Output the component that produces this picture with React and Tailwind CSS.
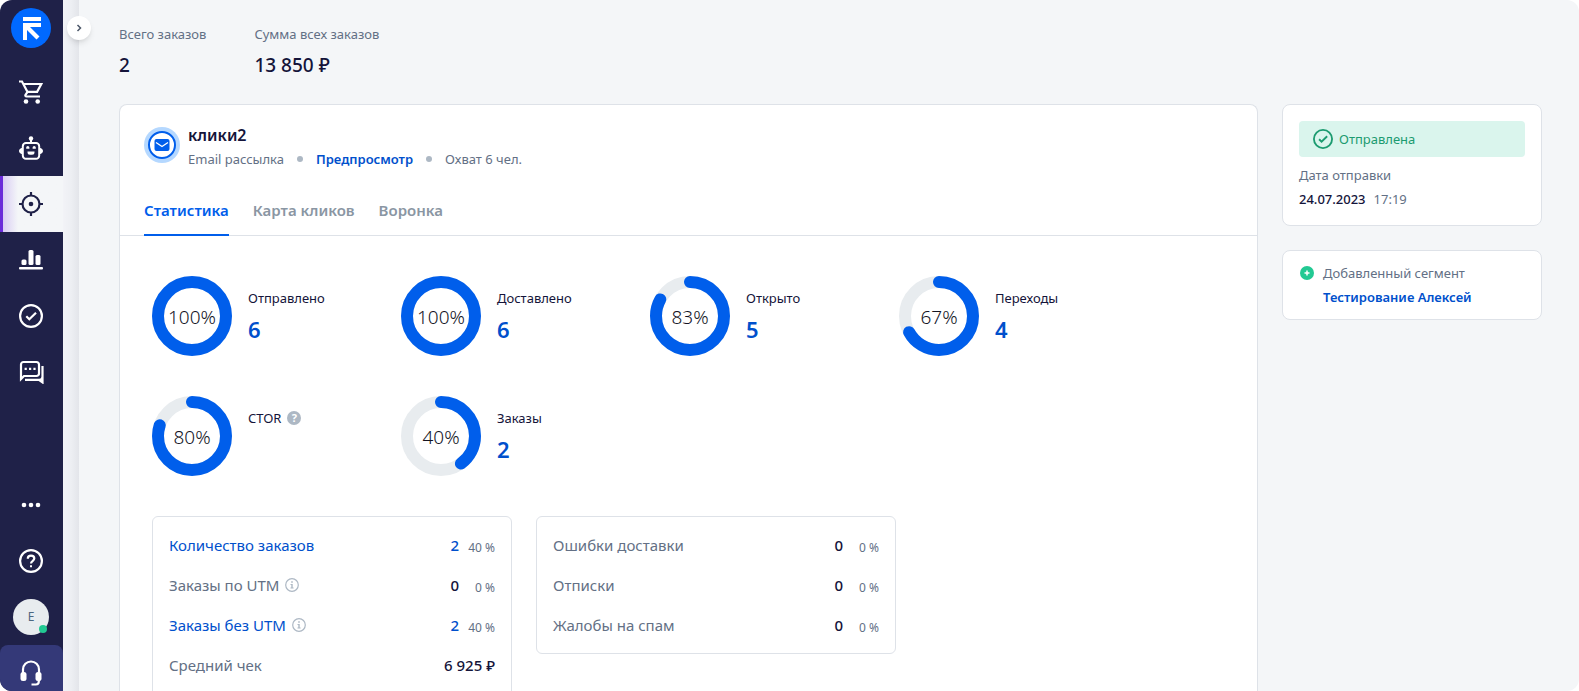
'use client';

import React, { useState } from 'react';

function CartIcon() {
  return (
    <svg width="24" height="24" viewBox="0 0 24 24" fill="none" stroke="currentColor" strokeWidth="2.200" aria-hidden="true">
      <path d="M0 1.500h3l5.500 10.500-2 2.800c-.5.900 0 1.700 1 1.700H21" />
      <path d="M4.600 4H22.300l-4.200 7.800H8.500" />
      <circle cx="7" cy="21.500" r="2.300" fill="currentColor" stroke="none" />
      <circle cx="18.700" cy="21.500" r="2.300" fill="currentColor" stroke="none" />
    </svg>
  );
}

function RobotIcon() {
  return (
    <svg width="24" height="24" viewBox="0 0 24 24" fill="none" stroke="currentColor" strokeWidth="2" aria-hidden="true">
      <circle cx="12" cy="2.500" r="2.200" fill="currentColor" stroke="none" />
      <path d="M12 3v4" />
      <path d="M7 7h10a3.200 3.200 0 0 1 3.200 3.200v9.300A3.200 3.200 0 0 1 17 22.800H7a3.200 3.200 0 0 1-3.200-3.300v-9.300A3.200 3.200 0 0 1 7 7z" />
      <path d="M3.500 11.800C1.200 12.300 0 13.500 0 15s1.200 2.700 3.500 3.200zM20.500 11.800c2.300.5 3.500 1.700 3.500 3.200s-1.200 2.700-3.500 3.200z" fill="currentColor" stroke="none" />
      <path d="M7.200 12.800v-1.300a1.600 1.600 0 0 1 3.200 0v1.300zM13.600 12.800v-1.300a1.600 1.600 0 0 1 3.200 0v1.300zM8.500 15.500h7v.8a2.500 2.500 0 0 1-2.500 2.500h-2a2.500 2.500 0 0 1-2.500-2.500z" fill="currentColor" stroke="none" />
    </svg>
  );
}

function TargetIcon() {
  return (
    <svg width="24" height="24" viewBox="0 0 24 24" fill="none" stroke="currentColor" strokeWidth="2.200" aria-hidden="true">
      <circle cx="12" cy="12" r="8.500" />
      <circle cx="12" cy="12" r="2.300" fill="currentColor" stroke="none" />
      <path d="M12 0v4M12 20v4M0 12h4M20 12h4" />
    </svg>
  );
}

function ChartIcon() {
  return (
    <svg width="24" height="24" viewBox="0 0 24 24" fill="currentColor" aria-hidden="true">
      <rect x="2.500" y="11.500" width="5" height="5.500" rx="1.500" />
      <rect x="9.500" y="2" width="5" height="15" rx="1.500" />
      <rect x="16.500" y="7" width="5" height="10" rx="1.500" />
      <rect x="0" y="19" width="24" height="2.500" rx="1" />
    </svg>
  );
}

function CheckCircleIcon({ size = 24 }) {
  return (
    <svg width={size} height={size} viewBox="0 0 24 24" fill="none" stroke="currentColor" strokeWidth="2.200" aria-hidden="true">
      <circle cx="12" cy="12" r="10.900" />
      <path d="M7.300 12.300l3 3L17 8.700" />
    </svg>
  );
}

function ChatIcon() {
  return (
    <svg width="26" height="24" viewBox="0 0 26 24" fill="none" stroke="currentColor" strokeWidth="2.200" aria-hidden="true">
      <path d="M3 19V4.500A2.500 2.500 0 0 1 5.500 2h13A2.500 2.500 0 0 1 21 4.500v9a2.500 2.500 0 0 1-2.500 2.500H6z" />
      <path d="M23.400 6h2.200V24.500l-5-3.500H7v-2.200h14.400a2 2 0 0 0 2-2z" fill="currentColor" stroke="none" />
      <path d="M6.600 7.700h2.200v2.200H6.600zM11 7.700h2.200v2.200H11zM15.400 7.700h2.200v2.200h-2.200z" fill="currentColor" stroke="none" />
    </svg>
  );
}

function DotsIcon() {
  return (
    <svg width="24" height="24" viewBox="0 0 24 24" fill="currentColor" aria-hidden="true">
      <circle cx="5" cy="12" r="2.300" />
      <circle cx="12" cy="12" r="2.300" />
      <circle cx="19" cy="12" r="2.300" />
    </svg>
  );
}

function HelpIcon() {
  return (
    <svg width="24" height="24" viewBox="0 0 24 24" fill="none" stroke="currentColor" strokeWidth="2.200" aria-hidden="true">
      <circle cx="12" cy="12" r="10.900" />
      <path d="M8.800 9.800C8.800 7.800 10.200 6.700 12 6.700s3.300 1.100 3.300 2.900c0 2.200-3.300 2.300-3.300 5" />
      <path d="M11 16.200h2v2h-2z" fill="currentColor" stroke="none" />
    </svg>
  );
}

function HeadsetIcon() {
  return (
    <svg width="24" height="28" viewBox="0 0 24 28" fill="none" stroke="currentColor" strokeWidth="2.200" aria-hidden="true">
      <path d="M4 15V10.500a8 8 0 0 1 16 0V15M19.800 20v2.500a3 3 0 0 1-3 3H12.500" />
      <rect x="1.500" y="13" width="6" height="9" rx="2.500" fill="currentColor" stroke="none" />
      <rect x="16.500" y="13" width="6" height="9" rx="2.500" fill="currentColor" stroke="none" />
    </svg>
  );
}

function InfoIcon() {
  return (
    <svg width="14" height="14" viewBox="0 0 14 14" fill="none" className="text-[#adb8c4]" aria-hidden="true">
      <circle cx="7" cy="7" r="6.300" stroke="currentColor" strokeWidth="1.200" />
      <path d="M6.200 3.300h1.600v1.500H6.200zM5.500 6h2.200v3.500h.9v1H5.500v-1h.8V7h-.8z" fill="currentColor" />
    </svg>
  );
}

const menu = [
  { id: 'orders', label: 'Заказы', Icon: CartIcon },
  { id: 'bots', label: 'Боты', Icon: RobotIcon },
  { id: 'campaigns', label: 'Рассылки', Icon: TargetIcon },
  { id: 'reports', label: 'Отчёты', Icon: ChartIcon },
  { id: 'tasks', label: 'Задачи', Icon: CheckCircleIcon },
  { id: 'chats', label: 'Чаты', Icon: ChatIcon },
];

const tabs = ['Статистика', 'Карта кликов', 'Воронка'];

const rings = [
  { label: 'Отправлено', percent: 100, value: 6 },
  { label: 'Доставлено', percent: 100, value: 6 },
  { label: 'Открыто', percent: 83, value: 5 },
  { label: 'Переходы', percent: 67, value: 4 },
  { label: 'CTOR', percent: 80, hint: true },
  { label: 'Заказы', percent: 40, value: 2 },
];

const orderRows = [
  { label: 'Количество заказов', value: '2', share: '40 %', link: true },
  { label: 'Заказы по UTM', value: '0', share: '0 %', info: true },
  { label: 'Заказы без UTM', value: '2', share: '40 %', link: true, info: true },
  { label: 'Средний чек', value: '6 925 ₽' },
];

const problemRows = [
  { label: 'Ошибки доставки', value: '0', share: '0 %' },
  { label: 'Отписки', value: '0', share: '0 %' },
  { label: 'Жалобы на спам', value: '0', share: '0 %' },
];

function Sidebar() {
  return (
    <nav className="flex w-[63px] shrink-0 flex-col bg-[#1f2148] text-white">
      <a href="#home" aria-label="Главная" className="flex h-16 justify-center pt-2 pr-px">
        <svg width="40" height="40" viewBox="0 0 40 40" aria-hidden="true">
          <circle cx="20" cy="20" r="20" fill="#0069ff" />
          <path d="M12 9h18v4H12z" fill="#fff" />
          <path d="M12 15h18v4H19l9.500 9.500-3 3L16 22v10h-4z" fill="#fff" />
        </svg>
      </a>
      {menu.map(({ id, label, Icon }) => (
        <a
          key={id}
          href={`#${id}`}
          aria-label={label}
          className={`flex h-14 items-center justify-center ${
            id === 'campaigns'
              ? 'border-l-3 border-[#6a2bd9] bg-linear-to-r from-[#d9cdf3] to-[#f4f6f8] to-25% pr-1 text-[#1f2148]'
              : 'pr-px'
          }`}
        >
          <Icon />
        </a>
      ))}
      <button type="button" aria-label="Ещё" className="mt-auto flex h-14 items-center justify-center pr-px">
        <DotsIcon />
      </button>
      <a href="#help" aria-label="Помощь" className="flex h-14 items-center justify-center pr-px">
        <HelpIcon />
      </a>
      <button type="button" className="flex h-14 items-center justify-center pr-px">
        <span className="relative flex size-9 items-center justify-center rounded-full bg-[#e8ecef] text-xs text-[#4d6780]">
          E
          <span className="absolute right-0.5 bottom-0.5 size-2 rounded-full bg-[#22c993]" />
        </span>
      </button>
      <button
        type="button"
        aria-label="Поддержка"
        className="flex h-[46px] items-start justify-center rounded-t-lg bg-[#343978] pt-3.5 pr-px"
      >
        <HeadsetIcon />
      </button>
    </nav>
  );
}

function Ring({ percent }) {
  const length = 2 * Math.PI * 34;

  return (
    <svg width="80" height="80" viewBox="0 0 80 80" className="shrink-0" role="img" aria-label={`${percent}%`}>
      <circle cx="40" cy="40" r="34" fill="none" stroke="#e8ecef" strokeWidth="12" />
      <circle
        cx="40"
        cy="40"
        r="34"
        fill="none"
        stroke="#005eeb"
        strokeWidth="12"
        strokeLinecap="round"
        strokeDasharray={`${(length * percent) / 100} ${length}`}
        transform="rotate(-90 40 40)"
      />
      <text x="40" y="48" textAnchor="middle" className="fill-[#14141f] text-[19px] font-light">
        {percent}%
      </text>
    </svg>
  );
}

function StatBox({ rows, className }) {
  return (
    <dl className={`w-[360px] rounded-md border border-[#dee2e8] px-4 py-2 ${className}`}>
      {rows.map((row) => (
        <div key={row.label} className="flex h-10 items-center text-[15px]">
          <dt className={`flex flex-1 items-center gap-1.5 ${row.link ? 'text-[#0050cc]' : 'text-[#637085]'}`}>
            {row.link ? <a href="#orders">{row.label}</a> : row.label}
            {row.info && <InfoIcon />}
          </dt>
          <dd className={`font-medium ${row.link ? 'text-[#0050cc]' : 'text-[#14143a]'}`}>{row.value}</dd>
          {row.share && <dd className="w-9 pt-1.5 text-right text-xs text-[#637085]">{row.share}</dd>}
        </div>
      ))}
    </dl>
  );
}

function Campaign() {
  const [activeTab, setActiveTab] = useState('Статистика');

  return (
    <section className="min-w-0 flex-1 rounded-t-lg border border-b-0 border-[#dee2e8] bg-white">
      <div className="flex items-start gap-2 px-6 pt-[18px]">
        <svg width="36" height="36" viewBox="0 0 36 36" className="mt-1" aria-hidden="true">
          <circle cx="18" cy="18" r="18" fill="#b5d8ff" />
          <circle cx="18" cy="18" r="13" fill="#fff" stroke="#005eeb" strokeWidth="2" />
          <rect x="10.500" y="12" width="15" height="12" rx="2" fill="#005eeb" />
          <path d="M12 15.500l6 4 6-4" fill="none" stroke="#fff" strokeWidth="1.300" />
        </svg>
        <div>
          <h1 className="text-base leading-6 font-semibold text-[#14143a]">клики2</h1>
          <div className="flex items-center gap-[13px] text-[13px] leading-6 text-[#637085]">
            <span>Email рассылка</span>
            <span className="size-1.5 rounded-full bg-[#adb8c4]" />
            <a href="#preview" className="font-semibold text-[#0050cc]">Предпросмотр</a>
            <span className="size-1.5 rounded-full bg-[#adb8c4]" />
            <span>Охват 6 чел.</span>
          </div>
        </div>
      </div>

      <div role="tablist" className="mt-4 flex gap-6 border-b border-[#dee2e8] px-6">
        {tabs.map((tab) => (
          <button
            key={tab}
            type="button"
            role="tab"
            aria-selected={tab === activeTab}
            onClick={() => setActiveTab(tab)}
            className={`-mb-px h-[49px] border-b-2 text-[15px] font-semibold ${
              tab === activeTab ? 'border-[#005eeb] text-[#005eeb]' : 'border-transparent text-[#8a96a3]'
            }`}
          >
            {tab}
          </button>
        ))}
      </div>

      <div className="px-8 pt-10">
        <div className="flex flex-wrap gap-y-10">
          {rings.map((ring) => (
            <div key={ring.label} className="flex w-[249px] gap-4">
              <Ring percent={ring.percent} />
              <div className="pt-3">
                <div className="flex items-center gap-1.5 text-[13px] leading-5 text-[#14143a]">
                  {ring.label}
                  {ring.hint && (
                    <button
                      type="button"
                      aria-label="Подсказка"
                      className="flex size-3.5 items-center justify-center rounded-full bg-[#adb8c4] text-[11px] leading-3 font-bold text-white"
                    >
                      ?
                    </button>
                  )}
                </div>
                <div className="pt-[3px] text-[22px] leading-9 font-semibold text-[#0050cc]">{ring.value}</div>
              </div>
            </div>
          ))}
        </div>

        <div className="mt-10 flex flex-wrap items-start gap-6">
          <StatBox rows={orderRows} className="pb-8" />
          <StatBox rows={problemRows} />
        </div>
      </div>
    </section>
  );
}

function Details() {
  return (
    <aside className="flex w-[260px] shrink-0 flex-col gap-6 text-[13px] leading-6 text-[#637085]">
      <section className="rounded-lg border border-[#dee2e8] bg-white px-4 pt-4 pb-3.5">
        <div className="flex h-9 items-center gap-1.5 rounded bg-[#daf5ed] px-3.5 text-[#1c9b70]">
          <CheckCircleIcon size={20} />
          Отправлена
        </div>
        <div className="pt-1.5">Дата отправки</div>
        <div className="flex gap-2">
          <span className="font-medium text-[#14143a]">24.07.2023</span>
          <span>17:19</span>
        </div>
      </section>
      <section className="flex gap-2 rounded-lg border border-[#dee2e8] bg-white px-4 py-2.5">
        <svg width="16" height="24" viewBox="0 0 16 24" aria-hidden="true">
          <circle cx="8" cy="12" r="7" fill="#22c993" />
          <path d="M8 9.500v5M5.500 12h5" stroke="#fff" strokeWidth="1.500" />
        </svg>
        <div>
          <div>Добавленный сегмент</div>
          <a href="#segment" className="font-semibold text-[#0050cc]">Тестирование Алексей</a>
        </div>
      </section>
    </aside>
  );
}

function App() {
  return (
    <div className="flex h-screen overflow-hidden rounded-xl bg-[#f4f6f8] font-['Noto_Sans','Open_Sans',sans-serif]">
      <Sidebar />
      <div className="relative w-4 shrink-0 bg-linear-to-r from-[#f2f3f7] via-[#edeff3] to-[#e3e5ea]">
        <button
          type="button"
          aria-label="Развернуть меню"
          className="absolute top-4 left-1 flex size-6 items-center justify-center rounded-full bg-white text-[#4c5769] shadow-md"
        >
          <svg width="8" height="8" viewBox="0 0 8 8" fill="none" stroke="currentColor" strokeWidth="1.500" aria-hidden="true">
            <path d="M2.500 1l3 3-3 3" />
          </svg>
        </button>
      </div>
      <main className="min-w-0 flex-1 overflow-hidden pr-[37px] pl-10">
        <dl className="flex gap-12 pt-6">
          <div>
            <dt className="text-[13px] leading-5 text-[#637085]">Всего заказов</dt>
            <dd className="pt-[7px] text-[19px] leading-7 font-medium text-[#14143a]">2</dd>
          </div>
          <div>
            <dt className="text-[13px] leading-5 text-[#637085]">Сумма всех заказов</dt>
            <dd className="pt-[7px] text-[19px] leading-7 font-medium text-[#14143a]">13 850 ₽</dd>
          </div>
        </dl>
        <div className="mt-[25px] flex items-start gap-6">
          <Campaign />
          <Details />
        </div>
      </main>
    </div>
  );
}

export default App;
